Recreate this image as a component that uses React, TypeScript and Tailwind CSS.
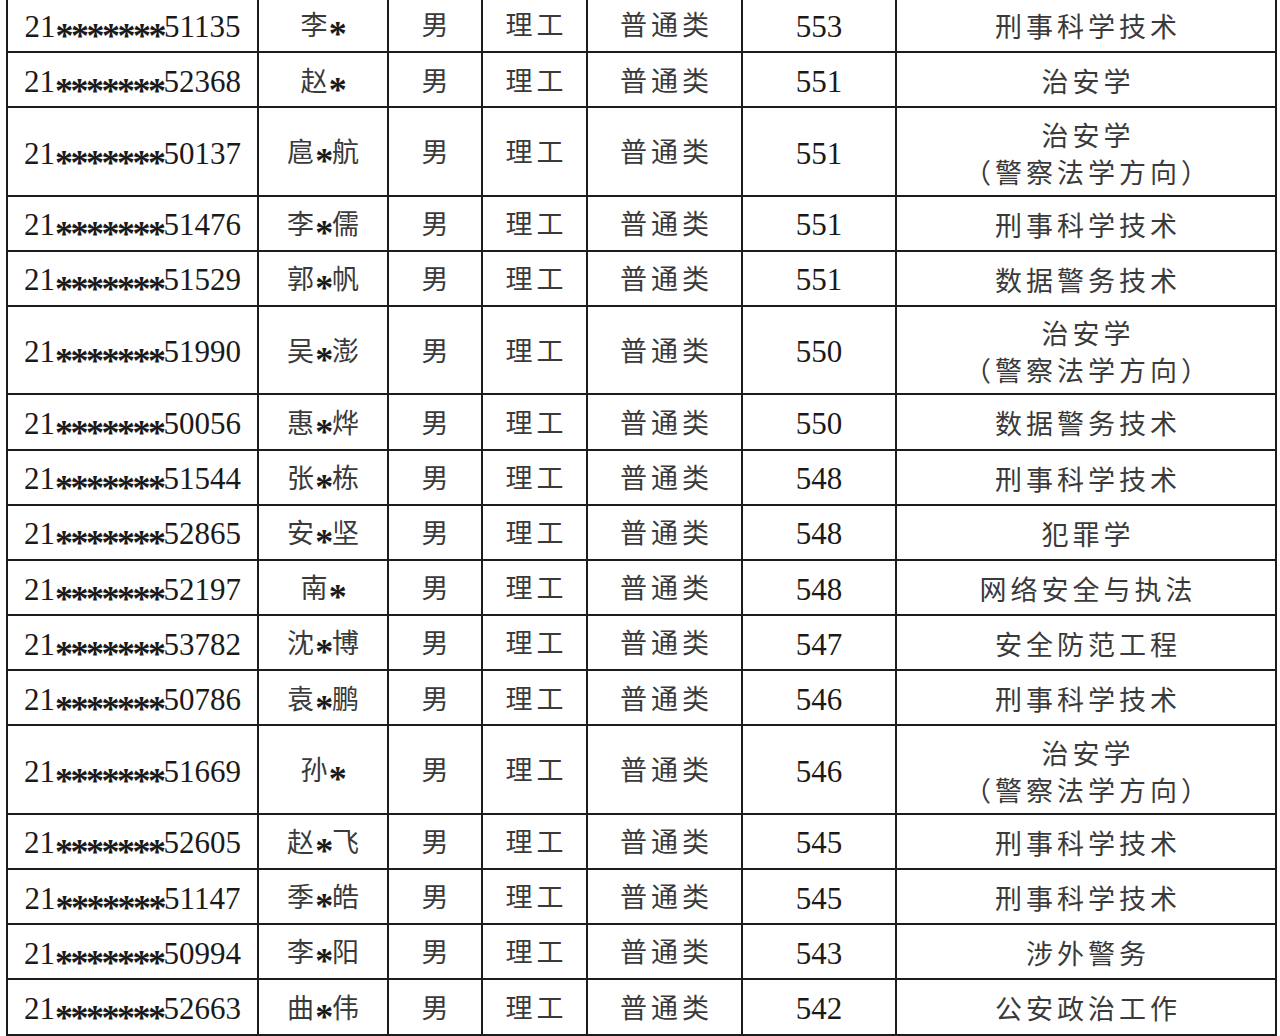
const rows: { id: string; name: string; score: string; major: string; sub?: string }[] = [
  { id: "51135", name: "李*", score: "553", major: "刑事科学技术" },
  { id: "52368", name: "赵*", score: "551", major: "治安学" },
  { id: "50137", name: "扈*航", score: "551", major: "治安学", sub: "（警察法学方向）" },
  { id: "51476", name: "李*儒", score: "551", major: "刑事科学技术" },
  { id: "51529", name: "郭*帆", score: "551", major: "数据警务技术" },
  { id: "51990", name: "吴*澎", score: "550", major: "治安学", sub: "（警察法学方向）" },
  { id: "50056", name: "惠*烨", score: "550", major: "数据警务技术" },
  { id: "51544", name: "张*栋", score: "548", major: "刑事科学技术" },
  { id: "52865", name: "安*坚", score: "548", major: "犯罪学" },
  { id: "52197", name: "南*", score: "548", major: "网络安全与执法" },
  { id: "53782", name: "沈*博", score: "547", major: "安全防范工程" },
  { id: "50786", name: "袁*鹏", score: "546", major: "刑事科学技术" },
  { id: "51669", name: "孙*", score: "546", major: "治安学", sub: "（警察法学方向）" },
  { id: "52605", name: "赵*飞", score: "545", major: "刑事科学技术" },
  { id: "51147", name: "季*皓", score: "545", major: "刑事科学技术" },
  { id: "50994", name: "李*阳", score: "543", major: "涉外警务" },
  { id: "52663", name: "曲*伟", score: "542", major: "公安政治工作" },
]

const serif = "font-['Liberation_Serif','Times_New_Roman',serif]"
const cjk = "font-['Noto_Sans_CJK_SC',sans-serif]"

// masked digit: a serif asterisk dropped to sit mid-height like the print
function Star() {
  return (
    <span
      className={`inline-block w-[15.5px] h-[20px] leading-[20px] text-center text-[36px] font-bold translate-y-[11px] text-[#1a1a1a] ${serif}`}
    >
      *
    </span>
  )
}

function Name({ value }: { value: string }) {
  const [a, b] = value.split("*")
  return (
    <span className={`${cjk} text-[27px] text-[#3a3a3a]`}>
      {a}
      <span className="inline-block w-[18px] text-center">
        <Star />
      </span>
      {b}
    </span>
  )
}

function Cn({ children }: { children: string }) {
  return <span className={`${cjk} text-[27px] tracking-[4px] pl-[4px] text-[#3a3a3a]`}>{children}</span>
}

export default function App() {
  const cell = "border-2 border-[#1c1c1c] text-center align-middle p-0"
  return (
    <div className="w-[1280px] h-[1036px] overflow-hidden bg-white">
      <table className="table-fixed border-collapse w-[1271px] ml-[6px] -mt-[4px]">
        <colgroup>
          <col className="w-[251px]" />
          <col className="w-[130px]" />
          <col className="w-[94px]" />
          <col className="w-[105px]" />
          <col className="w-[155px]" />
          <col className="w-[154px]" />
          <col className="w-[380px]" />
        </colgroup>
        <tbody>
          {rows.map((r) => (
            <tr key={r.id} className={r.sub ? "h-[88.3px]" : "h-[55.2px]"}>
              <td className={cell}>
                <span className={`${serif} text-[31px] leading-[40px] text-[#1a1a1a] pt-[4px] inline-block`}>
                  21
                  {Array.from({ length: 7 }).map((_, i) => (
                    <Star key={i} />
                  ))}
                  {r.id}
                </span>
              </td>
              <td className={cell}>
                <Name value={r.name} />
              </td>
              <td className={cell}>
                <Cn>男</Cn>
              </td>
              <td className={cell}>
                <Cn>理工</Cn>
              </td>
              <td className={cell}>
                <Cn>普通类</Cn>
              </td>
              <td className={cell}>
                <span className={`${serif} text-[31px] leading-[40px] text-[#1a1a1a] pt-[4px] inline-block`}>{r.score}</span>
              </td>
              <td className={cell}>
                <div className="flex flex-col items-center leading-[37px] pt-[2px]">
                  <Cn>{r.major}</Cn>
                  {r.sub && <Cn>{r.sub}</Cn>}
                </div>
              </td>
            </tr>
          ))}
        </tbody>
      </table>
    </div>
  )
}
